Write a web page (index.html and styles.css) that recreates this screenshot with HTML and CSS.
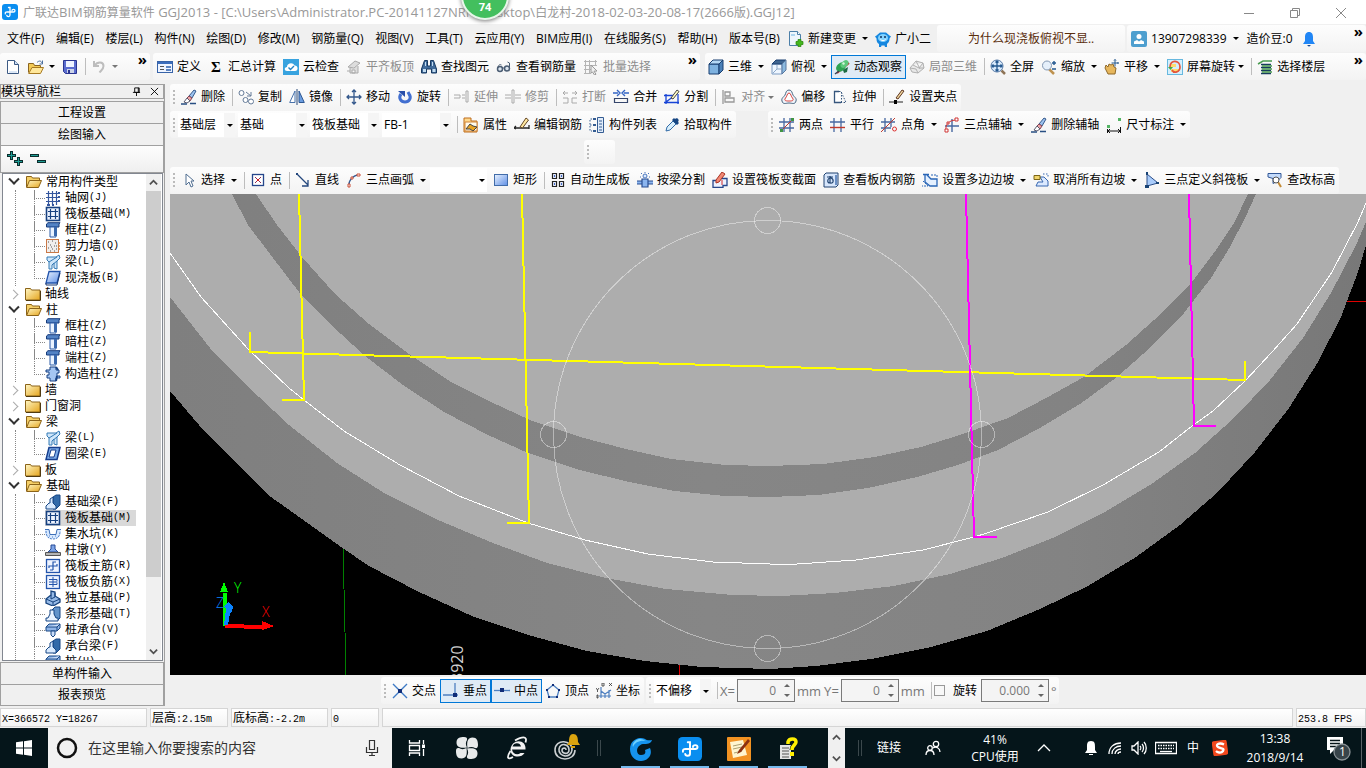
FILE: index.html
```html
<!DOCTYPE html>
<html lang="zh-CN">
<head>
<meta charset="utf-8">
<title>广联达BIM钢筋算量软件 GGJ2013</title>
<link rel="stylesheet" href="styles.css">
</head>
<body>
<svg class="defs" aria-hidden="true">
<defs>
<linearGradient id="g-blue" x1="0" y1="0" x2="1" y2="1"><stop offset="0" stop-color="#eaf3ff"/><stop offset="1" stop-color="#5f8fe6"/></linearGradient>
<linearGradient id="g-gold" x1="0" y1="0" x2="1" y2="1"><stop offset="0" stop-color="#fff6c4"/><stop offset="1" stop-color="#e5a51e"/></linearGradient>
<linearGradient id="g-solid" x1="170" y1="0" x2="1366" y2="0" gradientUnits="userSpaceOnUse"><stop offset="0" stop-color="#7f7f7f"/><stop offset=".45" stop-color="#868686"/><stop offset=".75" stop-color="#838383"/><stop offset="1" stop-color="#787878"/></linearGradient>
</defs>
<symbol id="app" viewBox="0 0 16 16"><rect width="16" height="16" rx="3" fill="#0a8ef0"/><path d="M6.500 3.500H8v7.500c0 2-3 2-3.200.3M3.300 9.800C3 8.300 4 8 5 8h6.500c2 0 2-2.600 0-2.600-1 0-1.500.6-1.500 1.200" fill="none" stroke="#fff" stroke-width="1.300" stroke-linecap="round"/></symbol>
<symbol id="new" viewBox="0 0 16 16"><path d="M2.500 1.500h7l4 4v9h-11z" fill="#fff" stroke="#3c5a84"/><path d="M9.500 1.500v4h4" fill="#cfe0f5" stroke="#3c5a84"/><path d="M4 12h8v2H4z" fill="#dce8f7"/></symbol>
<symbol id="open" viewBox="0 0 16 16"><path d="M.5 13.500v-9h5l1 2h6v2" fill="#f3ca56" stroke="#8a6420"/><path d="M.7 14.500 4 8.500h11.500l-3 6z" fill="#ffe79a" stroke="#a77a22"/><path d="M9 3.500c2-2 4-2 5 .5M14.500 1.500V5h-3" fill="none" stroke="#4a6f9e"/></symbol>
<symbol id="save" viewBox="0 0 16 16"><path d="M1.500 1.500h13v13h-11l-2-2z" fill="#5a6ccf" stroke="#2a3590"/><path d="M4 2h8v6H4z" fill="#eef3ff"/><path d="M5 10h7v4H5z" fill="#ccd4e8"/><path d="M6 11h2v3H6z" fill="#2a3590"/></symbol>
<symbol id="undo" viewBox="0 0 16 16"><path d="M3 2v5h5M3.500 6.500c3-4 9-4 9 .5 0 3-2 4-4 6.500" fill="none" stroke="#bdbdbd" stroke-width="2"/></symbol>
<symbol id="newchange" viewBox="0 0 16 16"><path d="M1.500.5h8l3 3v11h-11z" fill="#eef6fc" stroke="#4c7fa8"/><path d="M9.500.5v3h3" fill="#fff" stroke="#4c7fa8"/><path d="M3 3h4v2H3z" fill="#aed5f0"/><path d="M10 8.500h3v2h2v3h-2v2h-3v-2H8v-3h2z" fill="#45b81e" stroke="#258306" stroke-width=".7"/></symbol>
<symbol id="mascot" viewBox="0 0 16 16"><path d="M5 1.500h6l3.500 3 1.500 1-1.500 2C14.500 11 13 12 12 13v3h-2l-.5-1.500h-3L6 16H4v-3C2.500 12 1.500 11 1.500 7.500L0 5.500l1.500-1z" fill="#1687df"/><ellipse cx="8" cy="7" rx="5" ry="4" fill="#83d3ff"/><circle cx="6" cy="6" r="1" fill="#10305d"/><circle cx="10" cy="6" r="1" fill="#10305d"/><path d="M5.500 8.500c1.500 1.500 3.500 1.500 5 0" stroke="#fff" fill="none"/></symbol>
<symbol id="user" viewBox="0 0 16 16"><rect width="16" height="16" rx="2" fill="#4e9fcf"/><circle cx="8" cy="5.500" r="2.500" fill="#fff"/><path d="M3 13V10.500L6 9l2 1.500L10 9l3 1.500V13z" fill="#fff"/></symbol>
<symbol id="bell" viewBox="0 0 16 16"><path d="M8 1c3 0 4 2.500 4 5v4l2 3H2l2-3V6c0-2.500 1-5 4-5z" fill="#2186f5"/><path d="M6 14h4L8 15.800z" fill="#174b94"/></symbol>
<symbol id="define" viewBox="0 0 16 16"><rect x=".5" y="2.500" width="15" height="11" fill="#eef4ff" stroke="#3763a8"/><path d="M1 3h14v2H1z" fill="#3b6dbc"/><path d="M3 7.500h4M3 10.500h4" stroke="#555"/><path d="M9 7h5v2H9zM9 10h5v2H9z" fill="#5b83c0"/></symbol>
<symbol id="cloud" viewBox="0 0 16 16"><rect width="16" height="16" fill="#38a3df"/><path d="M4 12C1 12 1 8 4 8c0-4 6-5 7.500-1.500 4 0 4 5.500.5 5.500z" fill="#fff"/><path d="m5.500 8.500 2 2L11 7" fill="none" stroke="#2384c4" stroke-width="1.400"/></symbol>
<symbol id="flat" viewBox="0 0 16 16"><path d="M2 8 9 2l5 2-6 5zM4 9v5h8V7M1 12h3M6 11h3v3H6z" fill="#ddd" stroke="#aaa"/></symbol>
<symbol id="find" viewBox="0 0 16 16"><path d="M3.500 1.500h3V7h3V1.500h3l3 8.500v4h-5v-4h-5v4h-5v-4z" fill="#426c9b" stroke="#173960"/><path d="M2 10h3v3H2zM11.500 10h3v3h-3zM4 3h1v4H4zM11 3h1v4h-1z" fill="#c3dcf0"/></symbol>
<symbol id="glasses" viewBox="0 0 16 16"><circle cx="4" cy="10" r="2.500" fill="#dce5ef" stroke="#4b5d73" stroke-width="1.500"/><circle cx="11" cy="9.500" r="2.500" fill="#dce5ef" stroke="#4b5d73" stroke-width="1.500"/><path d="M6.500 9h2M2 9c0-3 2-4 3.500-3M13.500 9V4l-2-1" fill="none" stroke="#4b5d73"/></symbol>
<symbol id="batch" viewBox="0 0 16 16"><path d="M1 2.500h13M1 6.500h13M1 10.500h8M1 14.500h7M2.500 1v14M6.500 1v14M12.500 1v6" stroke="#b5b5b5" fill="none"/><path d="m8 6 6 6-3 .2 2 3-1.500.8-2-3L8 14z" fill="#eee" stroke="#9a9a9a"/></symbol>
<symbol id="cube" viewBox="0 0 16 16"><path d="M1 5h10v10H1z" fill="#7eb2e0" stroke="#193f70"/><path d="m1 5 4-4h10l-4 4z" fill="#b4d8f5" stroke="#193f70"/><path d="m11 5 4-4v10l-4 4z" fill="#4a80b8" stroke="#193f70"/></symbol>
<symbol id="cubetop" viewBox="0 0 16 16"><path d="M1 5h10v10H1z" fill="#eef6ff" stroke="#7c9bc2"/><path d="m1 5 4-4h10l-4 4z" fill="#3f6590" stroke="#193f70"/><path d="m11 5 4-4v10l-4 4z" fill="#8bb9df" stroke="#58779e"/><path d="m2 14 4-4h4M6 10V6" stroke="#8da9c9" fill="none"/></symbol>
<symbol id="dyn" viewBox="0 0 16 16"><path d="M3 14 15 4" stroke="#c33325" stroke-width="2"/><ellipse cx="7" cy="8" rx="5.500" ry="4" transform="rotate(-40 7 8)" fill="#2ea353"/><ellipse cx="10.500" cy="5" rx="4.500" ry="3" transform="rotate(-40 10.500 5)" fill="#5cc97c"/><path d="m9 11 5-3-1 5-3 1z" fill="#1c6a43"/><path d="m1 15 4-3" stroke="#345" stroke-width="1.500"/><circle cx="9.500" cy="4.500" r="1.200" fill="#d6f5dc"/></symbol>
<symbol id="part3d" viewBox="0 0 16 16"><path d="m1 9 6-7 7 2 1 5-6 5-6-1zM4 6l6 3 4-5M7 2l4 8M1 9l6 1 2 4M10 9l5 0" fill="#e8e8e8" stroke="#b0b0b0"/></symbol>
<symbol id="full" viewBox="0 0 16 16"><path d="m11.500 11.500 3.500 3.500" stroke="#8e7457" stroke-width="2.500"/><circle cx="7" cy="7" r="6" fill="#d8e9fb" stroke="#5578a5"/><path d="M7 2v10M2 7h10M5.500 3.500 7 2l1.500 1.500M5.500 10.500 7 12l1.500-1.500M3.500 5.500 2 7l1.500 1.500M10.500 5.500 12 7l-1.500 1.500" fill="none" stroke="#24588f" stroke-width="1.300"/></symbol>
<symbol id="zoomi" viewBox="0 0 16 16"><path d="m8 10 5 5" stroke="#be9250" stroke-width="2.500"/><circle cx="6" cy="6.500" r="4.500" fill="#e6f0fb" stroke="#8398b3"/><path d="M13 2v4M11 4h4M11 10h4" stroke="#24588f" stroke-width="1.400"/></symbol>
<symbol id="pan" viewBox="0 0 16 16"><path d="M4 15 1 9l1-3 2 2 1-3 2 1 2-1 1 3 2 1-1 6z" fill="#e7b75d" stroke="#8f692a"/><path d="M11 .5v7M7.500 4h7M10 1.500l1-1 1 1M13.500 3l1 1-1 1" fill="none" stroke="#24588f"/></symbol>
<symbol id="rotscr" viewBox="0 0 16 16"><rect x=".5" y=".5" width="15" height="15" fill="#d5effc" stroke="#67b8df"/><path d="M4 10h8v3H4zM4 5h5v3H4z" fill="#ffdc6e"/><path d="M3 8c0-8 10-7 10 0 0 5-6 7-8 3" fill="none" stroke="#e4553d" stroke-width="1.700"/><path d="M1 8h5L3.500 11z" fill="#45a842"/></symbol>
<symbol id="floors" viewBox="0 0 16 16"><path d="M4 5.500h10M4 8.500h10M4 11.500h10M4 14.500h10" stroke="#183c5d" stroke-width="1.500"/><path d="M1 5l5-3h9M5 7h10M5 10h10M5 13h10" stroke="#4a9c50" stroke-width="1.500" fill="none"/></symbol>
<symbol id="erase" viewBox="0 0 16 16"><path d="m8 7 5-6 2 1-4 7z" fill="#9cc2ef" stroke="#35598c"/><path d="m6 9 2-2 3 2-2 3z" fill="#eda4a6" stroke="#834453"/><path d="m6 9-3 4 3 1 3-2z" fill="#fff" stroke="#5a5a6d"/><path d="M0 15h6M9 14.500h6" stroke="#284f83" stroke-width="1.700" fill="none"/></symbol>
<symbol id="copy" viewBox="0 0 16 16"><circle cx="3.500" cy="4" r="2.500" fill="#fff" stroke="#657b98"/><circle cx="7.500" cy="11" r="2.500" fill="#fff" stroke="#657b98"/><circle cx="13" cy="12.500" r="2.500" fill="#fff" stroke="#657b98"/><path d="M8 3l5 4M13 3v4H9" stroke="#657b98" fill="none"/></symbol>
<symbol id="mirror" viewBox="0 0 16 16"><path d="M.7 13.500 6 2v11.500z" fill="#fff" stroke="#4972aa"/><path d="M15.300 13.500 10 2v11.500z" fill="#6b9de0" stroke="#2d5792"/><path d="M8 0v16" stroke="#294976"/></symbol>
<symbol id="move" viewBox="0 0 16 16"><path d="M8 1v14M1 8h14M6 3l2-2 2 2M6 13l2 2 2-2M3 6 1 8l2 2M13 6l2 2-2 2" fill="none" stroke="#34588c" stroke-width="1.300"/></symbol>
<symbol id="rot" viewBox="0 0 16 16"><path d="M4 5c-3 4 0 8 4 8s7-4 4-8l-1-2" fill="none" stroke="#426fd0" stroke-width="3"/><path d="M1 2h7v6z" fill="#294fa9"/></symbol>
<symbol id="extend" viewBox="0 0 16 16"><path d="M0 6h6v3H0M8 6h3M8 9h3M12 2h2v11h-2z" fill="none" stroke="#aaa"/></symbol>
<symbol id="trim" viewBox="0 0 16 16"><path d="M0 6h6M0 9h6M10 6h6M10 9h6M7 1h2v13H7z" fill="none" stroke="#aaa"/></symbol>
<symbol id="break" viewBox="0 0 16 16"><path d="M1 9h5v5H1M15 9h-5v5h5M1 4h5M10 4h5M3 2 1 4l2 2M13 2l2 2-2 2" fill="none" stroke="#aaa"/></symbol>
<symbol id="merge" viewBox="0 0 16 16"><path d="M6 9.500H1.500v4H6M10 9.500h4.500v4H10M6 9.500h4M6 13.500h4" fill="none" stroke="#35456b" stroke-width="1.200"/><path d="M0 4h5M11 4h5M4 1l3 3-3 3M12 1 9 4l3 3" fill="none" stroke="#3465c5" stroke-width="1.400"/></symbol>
<symbol id="split" viewBox="0 0 16 16"><path d="M0 6.500h10M0 13.500h15M2 5v10M14 5v10M2 13l8-6" fill="none" stroke="#1743d6" stroke-width="1.300"/><path d="m7 9 6-8 2 1.500-6 7.500z" fill="#fffbc4" stroke="#444"/></symbol>
<symbol id="align" viewBox="0 0 16 16"><path d="M2 1v14M4 3h5v4H4zM4 9h9v4H4z" fill="none" stroke="#999" stroke-width="1.300"/></symbol>
<symbol id="offset" viewBox="0 0 16 16"><path d="M8 1C5 1 5 4 4 6s-4 3-3 6c1 4 4 2 7 2s6 2 7-2c1-3-2-4-3-6S11 1 8 1z" fill="#eef3fa" stroke="#496681"/><path d="M8 4C6 4 6 8 4.500 9c-2 3 1 3 3.500 3s5.500 0 3.500-3C10 8 10 4 8 4z" fill="#fff" stroke="#d9423c"/></symbol>
<symbol id="stretch" viewBox="0 0 16 16"><path d="M7 2.500H2.500v11H9" fill="#fff" stroke="#36567d" stroke-width="1.300"/><path d="M7 2.500h2l5 11H9M9.500 3v10" fill="none" stroke="#36567d" stroke-dasharray="1.500 1.500"/></symbol>
<symbol id="gripset" viewBox="0 0 16 16"><path d="M0 13h5M8 13h6" stroke="#222"/><path d="M5 11h3v4H5z"/><path d="m7 9 6-8 2 1-6 8z" fill="#efd59c" stroke="#5f3722"/></symbol>
<symbol id="attr" viewBox="0 0 16 16"><path d="M1 1h7v3h6v11H1z" fill="#ffd88c" stroke="#bd6c1d"/><path d="M2 5h12v9H2z" fill="#fffbed" stroke="#d18439"/><path d="m3 12 4-5 3 2 4 1-4 4-3-2z" fill="#e8a323" stroke="#444"/></symbol>
<symbol id="editbar" viewBox="0 0 16 16"><path d="M0 11h15M2 9l-2 2 2 1M15 8v4" fill="none" stroke="#262626" stroke-width="1.300"/><path d="m6 10 6-9 2.500 2-6 8z" fill="#ffe8a0" stroke="#644625"/></symbol>
<symbol id="list" viewBox="0 0 16 16"><path d="M3 2H1v12h2M1 8h2" fill="none" stroke="#345c92" stroke-dasharray="1.500"/><path d="M4 2h3M4 8h3M4 14h3" stroke="#345c92" stroke-width="2"/><path d="M8.500.5h6v15h-6z" fill="#e1ecfa" stroke="#345c92"/><path d="M10 4h3M10 7h3M10 10h3M10 13h3" stroke="#345c92"/></symbol>
<symbol id="pick" viewBox="0 0 16 16"><path d="m2 14 1-4 6-6 3 3-6 6z" fill="#d9effc" stroke="#316ba7"/><path d="m8 3 2-2 1 1c2-2 5 1 3 3l1 1-2 2z" fill="#174683"/></symbol>
<symbol id="twopt" viewBox="0 0 16 16"><path d="M5 1v14M11 1v14M0 5h15M0 11h15" stroke="#4768a1" stroke-width="1.300"/><path d="m2 14 12-12" stroke="#c23a2c"/><path d="M1 12h3v3H1zM12 1h3v3h-3z" fill="#409444"/></symbol>
<symbol id="para" viewBox="0 0 16 16"><path d="M4 1v14M11 1v14M0 5h15" stroke="#4768a1" stroke-width="1.300"/><path d="M0 10.500h15" stroke="#c23a2c" stroke-width="1.400"/></symbol>
<symbol id="ptang" viewBox="0 0 16 16"><path d="M4 1v14M10 1v9M0 5h14M0 11h10" stroke="#4768a1" stroke-width="1.300"/><path d="m0 15 14-14" stroke="#c23a2c"/><circle cx="13.500" cy="12" r="2" fill="none" stroke="#d33"/></symbol>
<symbol id="arc3" viewBox="0 0 16 16"><path d="M8 2v13M1 9h14" stroke="#4768a1" stroke-width="1.400"/><path d="M2 14C1 7 5 3 13 3" fill="none" stroke="#cf3434"/><path d="M1 12h3v3H1zM11 1h3v3h-3zM3 5h2v2H3z" fill="#fff" stroke="#cf3434"/></symbol>
<symbol id="dim" viewBox="0 0 16 16"><path d="M1 8h3v3H1zM12 1h3v3h-3z" fill="#54b464"/><path d="M1.500 12v4M14.500 10v6M2 14h12M4 12l-2 2 2 2M12 12l2 2-2 2" fill="none" stroke="#111"/></symbol>
<symbol id="cursor" viewBox="0 0 16 16"><path d="M5 2v11l3-3 2 5 2-1-2-5h3z" fill="#fff" stroke="#506e91"/></symbol>
<symbol id="point" viewBox="0 0 16 16"><rect x="2.500" y="2.500" width="11" height="11" fill="#fff" stroke="#26468b" stroke-width="1.300"/><path d="m5 5 6 6M11 5l-6 6" stroke="#8f2d58"/><path d="M7 7h2v2H7z" fill="#d21f1f"/></symbol>
<symbol id="line" viewBox="0 0 16 16"><path d="m2 2 11 11M13 8v6H7" fill="none" stroke="#24477d" stroke-width="1.300"/><path d="M1 1h2v2H1z" fill="#24477d"/></symbol>
<symbol id="arc" viewBox="0 0 16 16"><path d="M3 14C2 9 7 3 13 3" fill="none" stroke="#365c94" stroke-width="1.300"/><path d="M2 12h2v3H2zM5 5h2v2H5zM11 2h3v2h-3z" fill="#fff" stroke="#c94f36"/></symbol>
<symbol id="rect" viewBox="0 0 16 16"><rect x="1.500" y="2.500" width="13" height="11" fill="url(#g-blue)" stroke="#416ca9"/></symbol>
<symbol id="autoslab" viewBox="0 0 16 16"><path d="M2.500 1.500h4v5h-4zM9.500 1.500h4v5h-4zM2.500 9.500h4v5h-4zM9.500 9.500h4v5h-4z" fill="#e9efff" stroke="#222" stroke-width="1.200"/><path d="M4 3h1v2H4zM11 3h1v2h-1zM4 11h1v2H4zM11 11h1v2h-1z" fill="#3e67c7"/></symbol>
<symbol id="beamcut" viewBox="0 0 16 16"><path d="M0 9h5v3H0M16 9h-5v3h5M5 7h6v8H5z" fill="#8bb5ef" stroke="#284d90" stroke-width="1.200"/><circle cx="8" cy="4" r="2" fill="#dcebff" stroke="#4b76bd"/><path d="M8 0v1M4 1l1 1M12 1l-1 1M3 5h1M12 5h1" stroke="#4b76bd"/></symbol>
<symbol id="varsec" viewBox="0 0 16 16"><path d="M1 8.500h6v-2h8v7h-4v2H1z" fill="#edf2ff" stroke="#26468b" stroke-width="1.300"/><path d="m4 8 6-8 3 2-6 8-3 1z" fill="#f18974" stroke="#aa3425"/><path d="M10 8v5" stroke="#d42a2a"/></symbol>
<symbol id="viewbar" viewBox="0 0 16 16"><path d="M3 1h12v12l-2 2H1V3z" fill="#d7e6fb" stroke="#204371"/><path d="M4 5h6M7 4v7c4 1 4-4 1-5s-5 5-1 5" fill="none" stroke="#204371" stroke-width="1.200"/><path d="M13 3v10" stroke="#6a8fc4" stroke-width="2"/></symbol>
<symbol id="slope" viewBox="0 0 16 16"><path d="M1 2.500h6M3 3v7l5 4h7V7H9L5 3" fill="#e4f0ff" stroke="#2865b6" stroke-width="1.300"/><path d="m1 9 5 5H0M9 3h6v3" fill="none" stroke="#2865b6" stroke-dasharray="2 1"/></symbol>
<symbol id="cslope" viewBox="0 0 16 16"><path d="M7 5h4l4 4v5H3l2-4h5z" fill="#dbe9ff" stroke="#3767b0"/><path d="M1 3.500h6v4H1z" fill="#f1d56b" stroke="#7c6616"/><path d="M10 2h5v4" fill="none" stroke="#3767b0" stroke-dasharray="1.500"/></symbol>
<symbol id="tri" viewBox="0 0 16 16"><path d="M3 2v12l11-3z" fill="#a9ccfb" stroke="#2d4f89"/><path d="M2 0h2v3H2zM1 13h4v3H1zM12 10h3v2h-3z" fill="#174274"/></symbol>
<symbol id="elev" viewBox="0 0 16 16"><path d="M1 1.500h13v4l-4 4-4 2v-5L1 5z" fill="#c3dafa" stroke="#315796"/><path d="m11 10 3 5" stroke="#c48b35" stroke-width="2"/><circle cx="9" cy="8" r="3" fill="#fff" stroke="#555"/></symbol>
<symbol id="cross" viewBox="0 0 16 16"><path d="M1 1l14 14M15 1 1 15" stroke="#3f7bc6" stroke-width="1.400"/><path d="M6 6h4v4H6z" fill="#102d78"/></symbol>
<symbol id="perp" viewBox="0 0 16 16"><path d="M12 0v13M0 12h15" stroke="#4f80c0" stroke-width="1.300"/><path d="M10 10h4v4h-4z" fill="#102d78"/></symbol>
<symbol id="mid" viewBox="0 0 16 16"><path d="M0 7.500h16" stroke="#4f80c0" stroke-width="1.300"/><path d="M6 5h4v4H6z" fill="#102d78"/></symbol>
<symbol id="vertex" viewBox="0 0 16 16"><path d="M8 2 14 7l-2 7H4L2 7z" fill="none" stroke="#4f80c0" stroke-width="1.300"/><path d="M7 1h2v2H7zM1 6h2v2H1zM13 6h2v2h-2zM3 13h2v2H3zM11 13h2v2h-2z" fill="#102d78"/></symbol>
<symbol id="coord" viewBox="0 0 16 16"><path d="M5 4v11M3 13h12M5 8l4 3 6-4M9 11v4M13 7v8" fill="none" stroke="#4f80c0" stroke-width="1.200"/><path d="m13 0 3 3m0-3-3 3M0 5l1.500 2L3 5M1.500 7v2M6 0h2v3H6zM1 12h1v3H1z" fill="none" stroke="#333" stroke-width=".8"/></symbol>
<symbol id="folder" viewBox="0 0 16 16"><path d="M.5 2.500h5l1 1.500h8.500v10H.5z" fill="url(#g-gold)" stroke="#8b6318"/><path d="M1 14.500h14.500V5" fill="none" stroke="#503a10"/></symbol>
<symbol id="folderopen" viewBox="0 0 16 16"><path d="M.5 13V2.500h5l1 1.500h7V7" fill="#f5cf67" stroke="#8b6318"/><path d="M.6 13.500 3.500 6.500h12l-3 7z" fill="url(#g-gold)" stroke="#8b6318"/></symbol>
<symbol id="grid" viewBox="0 0 16 16"><path d="M3.500 1v14M7.500 1v14M11.500 1v14M1 3.500h12M1 7.500h12M1 11.500h12" stroke="#34569e" stroke-width="1.200"/><path d="M13 2h2v2h-2zM13 6h2v2h-2zM13 10h2v2h-2zM2 14h3v2H2zM7 14h2v2H7z" fill="#34569e"/></symbol>
<symbol id="raft" viewBox="0 0 16 16"><rect x="1.500" y="1.500" width="13" height="13" fill="#eef4ff" stroke="#174180" stroke-width="1.600"/><path d="M3 5.500h10M3 10.500h10M5.500 3v10M10.500 3v10" stroke="#174180" stroke-width="1.200"/></symbol>
<symbol id="col" viewBox="0 0 16 16"><path d="M1.500 2 3 .7h12L14 2v3H1.500z" fill="#5383c5" stroke="#173b7a"/><path d="M5 5h6v10H5z" fill="#eaf3ff" stroke="#2a5ba7"/><path d="M9 5h3v9H9z" fill="#3a68ac"/></symbol>
<symbol id="wall" viewBox="0 0 16 16"><rect x="1.500" y="1.500" width="12" height="13" fill="#f1eeec" stroke="#c97847"/><path d="M3 4h1M7 3h1M10 5h1M5 7h1M9 8h1M3 10h1M7 11h1M11 11h1M5 13h1M9 13h1M6 9h1M11 8h1" stroke="#555"/><path d="M13 5h2M13 8h2M13 11h2" stroke="#e0823a" stroke-width="1.400"/></symbol>
<symbol id="beam" viewBox="0 0 16 16"><path d="M2 3h9l3-2 1 3-3 3v8l-3-1V9l-2 2v4H4v-7L2 6z" fill="#cfe6fa" stroke="#347ab5"/><path d="m4 8 8-5M7 11l5-4" stroke="#347ab5"/></symbol>
<symbol id="slab" viewBox="0 0 16 16"><path d="M4 1.500h11L12 13H1z" fill="url(#g-blue)" stroke="#2153ab" stroke-width="1.300"/><path d="M1 13v2h11l3-12" fill="none" stroke="#18346c"/></symbol>
<symbol id="scol" viewBox="0 0 16 16"><path d="M5 1h6v3h3v3h-2v3h3v2h-4v3H5v-3H2V9h2V6H1V4h4z" fill="#a5c6f3" stroke="#174083"/><path d="M11 1l2 3M12 10l-1 5" stroke="#174083" stroke-width="2"/></symbol>
<symbol id="ring" viewBox="0 0 16 16"><path d="M4 1.500h11l-3 12H1z" fill="#7cabe7" stroke="#163e8e" stroke-width="1.500"/><path d="M6 4h5l-2 7H4z" fill="#fff" stroke="#163e8e"/></symbol>
<symbol id="fbeam" viewBox="0 0 16 16"><path d="m8 3 3-2h4v10l-4 4H8z" fill="#326aa9" stroke="#174785"/><path d="M1 15v-3l3-3h1V5l3-2v6l3 3v3z" fill="#d9eafe" stroke="#174785"/></symbol>
<symbol id="pit" viewBox="0 0 16 16"><path d="M0 4h4l1 4h6l1-4h4c0 7-3 9-8 9S0 11 0 4z" fill="#d8e9ff"/><path d="M0 3.500h4l1 5h6l1-5h4" fill="none" stroke="#3d6fb8"/><path d="M1 5c0 6 3 8 7 8s7-2 7-8" fill="none" stroke="#4d7fc8" stroke-dasharray="2 1"/><path d="M4 10h1M7 11h1M10 10h1" stroke="#4d7fc8"/></symbol>
<symbol id="pier" viewBox="0 0 16 16"><path d="M6 3h4v4l3 3H3l3-3z" fill="#7da4e6" stroke="#274b96"/><path d="M.5 10.500h15v3H.5z" fill="#b5b5b5" stroke="#555"/></symbol>
<symbol id="mainbar" viewBox="0 0 16 16"><rect x="1.500" y="1.500" width="13" height="13" fill="#eef4ff" stroke="#2455ac" stroke-width="1.300"/><path d="M4 10V8h8V6M8 12V4h3M8 12H5" fill="none" stroke="#2455ac" stroke-width="1.200"/></symbol>
<symbol id="negbar" viewBox="0 0 16 16"><rect x="1.500" y="1.500" width="13" height="13" fill="#eef4ff" stroke="#2455ac" stroke-width="1.300"/><path d="M4 5.500h8v2M4 10.500h8v-2M4 8h8M8 3v10" fill="none" stroke="#2455ac"/></symbol>
<symbol id="indep" viewBox="0 0 16 16"><path d="m1 9 5-4V1l4 1v4l5 3v3l-7 4-7-3z" fill="#96bae7" stroke="#16437e" stroke-width="1.300"/><path d="m1 9 7 3 7-3M8 12v3M6 5v4l4-2V3" fill="none" stroke="#16437e"/></symbol>
<symbol id="strip" viewBox="0 0 16 16"><path d="m7 4 3-3h5v11l-3 3z" fill="#6293ca" stroke="#174785"/><path d="M1 15v-3h2l2-4V4h4v4l2 4h2v3z" fill="#e8f2ff" stroke="#174785"/></symbol>
<symbol id="cap" viewBox="0 0 16 16"><path d="m1 5 3-3h11v4l-3 3H1z" fill="#91b6e8" stroke="#174785"/><path d="M1 5h11l3-3M12 5v4M6 9h4v4l-2 2-2-2z" fill="#c9ddf9" stroke="#174785"/></symbol>
</svg>

<header class="titlebar">
  <svg class="ic"><use href="#app"/></svg>
  <h1><span>广联达</span>BIM<span>钢筋算量软件</span> GGJ2013 - [C:\Users\Administrator.PC-20141127NRH\Desktop\<span>白龙村</span>-2018-02-03-20-08-17(2666<span>版</span>).GGJ12]</h1>
  <div class="ball">74</div>
  <div class="winbtns">
    <button aria-label="最小化"><svg viewBox="0 0 12 12"><path d="M1 6.500h10"/></svg></button>
    <button aria-label="还原"><svg viewBox="0 0 12 12"><path d="M1.500 3.500h7v7h-7zM3.500 3V1.500h7v7H9"/></svg></button>
    <button aria-label="关闭"><svg viewBox="0 0 12 12"><path d="m1 1 10 10M11 1 1 11"/></svg></button>
  </div>
</header>

<div class="menurow">
  <nav class="menu">
    <button>文件(F)</button><button>编辑(E)</button><button>楼层(L)</button><button>构件(N)</button><button>绘图(D)</button><button>修改(M)</button><button>钢筋量(Q)</button><button>视图(V)</button><button>工具(T)</button><button>云应用(Y)</button><button>BIM应用(I)</button><button>在线服务(S)</button><button>帮助(H)</button><button>版本号(B)</button>
  </nav>
  <button class="btn"><svg class="ic"><use href="#newchange"/></svg>新建变更<i class="dd"></i></button>
  <button class="btn"><svg class="ic"><use href="#mascot"/></svg>广小二</button>
  <div class="bar promo"><a href="#help">为什么现浇板俯视不显..</a></div>
  <div class="bar account">
    <button class="btn"><svg class="ic"><use href="#user"/></svg>13907298339<i class="dd"></i></button>
    <span>造价豆:0</span>
    <svg class="ic"><use href="#bell"/></svg>
    <button class="more" aria-label="更多">»</button>
  </div>
</div>

<div class="toolrow">
  <div class="bar file">
    <button class="mini" aria-label="新建"><svg class="ic"><use href="#new"/></svg></button>
    <button class="mini" aria-label="打开"><svg class="ic"><use href="#open"/></svg><i class="dd"></i></button>
    <button class="mini" aria-label="保存"><svg class="ic"><use href="#save"/></svg></button>
    <i class="sep"></i>
    <button class="mini off" aria-label="撤销"><svg class="ic"><use href="#undo"/></svg><i class="dd"></i></button>
    <button class="more" aria-label="更多">»</button>
  </div>
  <div class="bar common">
    <button class="btn"><svg class="ic"><use href="#define"/></svg>定义</button>
    <button class="btn"><b class="ic sigma">Σ</b>汇总计算</button>
    <button class="btn"><svg class="ic"><use href="#cloud"/></svg>云检查</button>
    <button class="btn off"><svg class="ic"><use href="#flat"/></svg>平齐板顶</button>
    <button class="btn"><svg class="ic"><use href="#find"/></svg>查找图元</button>
    <button class="btn"><svg class="ic"><use href="#glasses"/></svg>查看钢筋量</button>
    <button class="btn off"><svg class="ic"><use href="#batch"/></svg>批量选择</button>
    <button class="more" aria-label="更多">»</button>
  </div>
  <div class="bar view">
    <button class="btn"><svg class="ic"><use href="#cube"/></svg>三维<i class="dd"></i></button>
    <button class="btn"><svg class="ic"><use href="#cubetop"/></svg>俯视<i class="dd"></i></button>
    <button class="btn on"><svg class="ic"><use href="#dyn"/></svg>动态观察</button>
    <button class="btn off"><svg class="ic"><use href="#part3d"/></svg>局部三维</button>
    <i class="sep"></i>
    <button class="btn"><svg class="ic"><use href="#full"/></svg>全屏</button>
    <button class="btn"><svg class="ic"><use href="#zoomi"/></svg>缩放<i class="dd"></i></button>
    <button class="btn"><svg class="ic"><use href="#pan"/></svg>平移<i class="dd"></i></button>
    <button class="btn"><svg class="ic"><use href="#rotscr"/></svg>屏幕旋转<i class="dd tight"></i></button>
    <i class="sep"></i>
    <button class="btn"><svg class="ic"><use href="#floors"/></svg>选择楼层</button>
    <button class="more" aria-label="更多">»</button>
  </div>
</div>

<main class="work">
  <aside class="side">
    <div class="sidehead"><h2>模块导航栏</h2>
      <button aria-label="固定"><svg viewBox="0 0 10 10"><path d="M3 1h5v5H3zM1 6h8M5 6v4M7 1v5"/></svg></button>
      <button aria-label="关闭"><svg viewBox="0 0 10 10"><path d="m1 1 8 8M9 1 1 9"/></svg></button>
    </div>
    <button class="tab">工程设置</button>
    <button class="tab">绘图输入</button>
    <div class="pm">
      <button aria-label="全部展开"><svg viewBox="0 0 16 16"><path d="M4.500 0v9M0 4.500h9M11.500 6v9M7 10.500h9" stroke="#0b2d2c" stroke-width="3"/><path d="M4.500 1v7M1 4.500h7M11.500 7v7M8 10.500h7" stroke="#1e9d94"/></svg></button>
      <button aria-label="全部折叠"><svg viewBox="0 0 16 16"><path d="M0 4.500h9M7 10.500h9" stroke="#0b2d2c" stroke-width="3"/><path d="M1 4.500h7M8 10.500h7" stroke="#1e9d94"/></svg></button>
    </div>
    <div class="treebox">
      <ul class="tree">
        <li class="open"><div class="fold"><svg class="ic"><use href="#folderopen"/></svg>常用构件类型</div>
          <ul>
            <li><span><svg class="ic"><use href="#grid"/></svg>轴网<s>(J)</s></span></li>
            <li><span><svg class="ic"><use href="#raft"/></svg>筏板基础<s>(M)</s></span></li>
            <li><span><svg class="ic"><use href="#col"/></svg>框柱<s>(Z)</s></span></li>
            <li><span><svg class="ic"><use href="#wall"/></svg>剪力墙<s>(Q)</s></span></li>
            <li><span><svg class="ic"><use href="#beam"/></svg>梁<s>(L)</s></span></li>
            <li><span><svg class="ic"><use href="#slab"/></svg>现浇板<s>(B)</s></span></li>
          </ul></li>
        <li><div class="fold"><svg class="ic"><use href="#folder"/></svg>轴线</div></li>
        <li class="open"><div class="fold"><svg class="ic"><use href="#folderopen"/></svg>柱</div>
          <ul>
            <li><span><svg class="ic"><use href="#col"/></svg>框柱<s>(Z)</s></span></li>
            <li><span><svg class="ic"><use href="#col"/></svg>暗柱<s>(Z)</s></span></li>
            <li><span><svg class="ic"><use href="#col"/></svg>端柱<s>(Z)</s></span></li>
            <li><span><svg class="ic"><use href="#scol"/></svg>构造柱<s>(Z)</s></span></li>
          </ul></li>
        <li><div class="fold"><svg class="ic"><use href="#folder"/></svg>墙</div></li>
        <li><div class="fold"><svg class="ic"><use href="#folder"/></svg>门窗洞</div></li>
        <li class="open"><div class="fold"><svg class="ic"><use href="#folderopen"/></svg>梁</div>
          <ul>
            <li><span><svg class="ic"><use href="#beam"/></svg>梁<s>(L)</s></span></li>
            <li><span><svg class="ic"><use href="#ring"/></svg>圈梁<s>(E)</s></span></li>
          </ul></li>
        <li><div class="fold"><svg class="ic"><use href="#folder"/></svg>板</div></li>
        <li class="open"><div class="fold"><svg class="ic"><use href="#folderopen"/></svg>基础</div>
          <ul>
            <li><span><svg class="ic"><use href="#fbeam"/></svg>基础梁<s>(F)</s></span></li>
            <li><span class="sel"><svg class="ic"><use href="#raft"/></svg>筏板基础<s>(M)</s></span></li>
            <li><span><svg class="ic"><use href="#pit"/></svg>集水坑<s>(K)</s></span></li>
            <li><span><svg class="ic"><use href="#pier"/></svg>柱墩<s>(Y)</s></span></li>
            <li><span><svg class="ic"><use href="#mainbar"/></svg>筏板主筋<s>(R)</s></span></li>
            <li><span><svg class="ic"><use href="#negbar"/></svg>筏板负筋<s>(X)</s></span></li>
            <li><span><svg class="ic"><use href="#indep"/></svg>独立基础<s>(P)</s></span></li>
            <li><span><svg class="ic"><use href="#strip"/></svg>条形基础<s>(T)</s></span></li>
            <li><span><svg class="ic"><use href="#cap"/></svg>桩承台<s>(V)</s></span></li>
            <li><span><svg class="ic"><use href="#fbeam"/></svg>承台梁<s>(F)</s></span></li>
            <li><span><svg class="ic"><use href="#cap"/></svg>桩<s>(U)</s></span></li>
          </ul></li>
      </ul>
      <div class="scroll">
        <svg viewBox="0 0 10 10"><path d="m1 7 4-4 4 4"/></svg>
        <i></i>
        <svg viewBox="0 0 10 10"><path d="m1 3 4 4 4-4"/></svg>
      </div>
    </div>
    <button class="tab">单构件输入</button>
    <button class="tab">报表预览</button>
  </aside>

  <section class="stage">
    <div class="row">
      <div class="bar"><i class="grip"></i>
        <button class="btn"><svg class="ic"><use href="#erase"/></svg>删除</button><i class="sep"></i>
        <button class="btn"><svg class="ic"><use href="#copy"/></svg>复制</button>
        <button class="btn"><svg class="ic"><use href="#mirror"/></svg>镜像</button><i class="sep"></i>
        <button class="btn"><svg class="ic"><use href="#move"/></svg>移动</button>
        <button class="btn"><svg class="ic"><use href="#rot"/></svg>旋转</button><i class="sep"></i>
        <button class="btn off"><svg class="ic"><use href="#extend"/></svg>延伸</button>
        <button class="btn off"><svg class="ic"><use href="#trim"/></svg>修剪</button><i class="sep"></i>
        <button class="btn off"><svg class="ic"><use href="#break"/></svg>打断</button>
        <button class="btn"><svg class="ic"><use href="#merge"/></svg>合并</button>
        <button class="btn"><svg class="ic"><use href="#split"/></svg>分割</button><i class="sep"></i>
        <button class="btn off"><svg class="ic"><use href="#align"/></svg>对齐<i class="dd tight"></i></button>
        <button class="btn"><svg class="ic"><use href="#offset"/></svg>偏移</button>
        <button class="btn"><svg class="ic"><use href="#stretch"/></svg>拉伸</button><i class="sep"></i>
        <button class="btn"><svg class="ic"><use href="#gripset"/></svg>设置夹点</button>
      </div>
    </div>
    <div class="row">
      <div class="bar"><i class="grip"></i>
        <span class="combo short"><select aria-label="楼层"><option>基础层</option></select></span>
        <span class="combo"><select aria-label="构件大类"><option>基础</option></select></span>
        <span class="combo"><select aria-label="构件类型"><option>筏板基础</option></select></span>
        <span class="combo"><select aria-label="构件"><option>FB-1</option></select></span><i class="sep"></i>
        <button class="btn"><svg class="ic"><use href="#attr"/></svg>属性</button>
        <button class="btn"><svg class="ic"><use href="#editbar"/></svg>编辑钢筋</button>
        <button class="btn"><svg class="ic"><use href="#list"/></svg>构件列表</button>
        <button class="btn"><svg class="ic"><use href="#pick"/></svg>拾取构件</button>
      </div>
      <div class="bar axis"><i class="grip"></i>
        <button class="btn"><svg class="ic"><use href="#twopt"/></svg>两点</button>
        <button class="btn"><svg class="ic"><use href="#para"/></svg>平行</button>
        <button class="btn"><svg class="ic"><use href="#ptang"/></svg>点角<i class="dd"></i></button>
        <button class="btn"><svg class="ic"><use href="#arc3"/></svg>三点辅轴<i class="dd"></i></button>
        <button class="btn"><svg class="ic"><use href="#erase"/></svg>删除辅轴</button>
        <button class="btn"><svg class="ic"><use href="#dim"/></svg>尺寸标注<i class="dd"></i></button>
      </div>
    </div>
    <div class="row"><div class="bar stub"><i class="grip"></i></div></div>
    <div class="row">
      <div class="bar"><i class="grip"></i>
        <button class="btn"><svg class="ic"><use href="#cursor"/></svg>选择<i class="dd"></i></button><i class="sep"></i>
        <button class="btn"><svg class="ic"><use href="#point"/></svg>点</button><i class="sep"></i>
        <button class="btn"><svg class="ic"><use href="#line"/></svg>直线</button>
        <button class="btn"><svg class="ic"><use href="#arc"/></svg>三点画弧<i class="dd"></i></button>
        <span class="combo short plain"><select aria-label="画弧方式"><option></option></select></span>
        <button class="btn"><svg class="ic"><use href="#rect"/></svg>矩形</button><i class="sep"></i>
        <button class="btn"><svg class="ic"><use href="#autoslab"/></svg>自动生成板</button>
        <button class="btn"><svg class="ic"><use href="#beamcut"/></svg>按梁分割</button>
        <button class="btn"><svg class="ic"><use href="#varsec"/></svg>设置筏板变截面</button>
        <button class="btn"><svg class="ic"><use href="#viewbar"/></svg>查看板内钢筋</button>
        <button class="btn"><svg class="ic"><use href="#slope"/></svg>设置多边边坡<i class="dd"></i></button>
        <button class="btn"><svg class="ic"><use href="#cslope"/></svg>取消所有边坡<i class="dd"></i></button>
        <button class="btn"><svg class="ic"><use href="#tri"/></svg>三点定义斜筏板<i class="dd"></i></button>
        <button class="btn"><svg class="ic"><use href="#elev"/></svg>查改标高</button>
      </div>
    </div>

    <div class="canvas">
      <svg viewBox="170 194 1196 481" preserveAspectRatio="xMidYMid slice" role="img" aria-label="筏板基础三维视图">
        <g shape-rendering="crispEdges">
        <path fill="#000" d="M170 194h1196v481H170z"/>
        <path d="M343 545 346 675" stroke="#008000" fill="none"/>
        <path d="M679.500 660v15M1340 301.500h26" stroke="#e00000" fill="none"/>
        <path fill="url(#g-solid)" d="M170 194V391L199 425 220 447 271 497 344 549 369 566 419 592 472 616 528 635 587 651 645 661 702 667 770 669 816 666 871 659 931 647 987 631 1040 609 1088 586 1136 557 1180 525 1218 492 1255 452 1289 408 1318 362 1341 317 1358 272 1366 245V194z"/>
        <path fill="#adadad" d="M170 194V297L210 348 243 382 289 425 337 463 384 493 438 520 493 543 547 563 606 578 666 589 733 595 781 596 835 593 894 586 950 574 1002 558 1055 537 1105 512 1153 483 1195 453 1234 418 1270 380 1303 338 1331 293 1356 245 1366 222V194z"/>
        <path fill="url(#g-solid)" d="M256 194 277 225 302 257 335 294 369 324 409 354 451 382 491 402 530 420 580 437 626 449 671 459 725 465 770 466 823 464 875 457 921 447 960 435 1008 418 1048 397 1084 377 1126 345 1163 312 1192 282 1216 250 1234 223 1248 194H1256L1245 218 1230 247 1211 278 1184 313 1151 347 1117 377 1080 404 1040 428 998 450 958 465 917 477 868 488 818 495 770 497 725 496 675 491 629 482 580 470 528 453 488 435 444 412 403 385 365 356 329 323 302 296 270 254 248 225 232 194z"/>
        <path fill="none" stroke="#fff" d="M170 253 201 297 249 350 289 388 304 400 344 431 400 465 459 496 528 523 585 540 648 554 713 562 770 564 797 564 856 560 923 550 974 537 987 533 1048 512 1103 485 1159 452 1192 426 1213 411 1245 381 1272 352 1297 324 1332 272 1358 222 1366 203"/>
        <g fill="none" stroke="#ff0" stroke-width="2"><path d="M299 194 304 400H282"/><path d="M522 194 529 523H507"/><path d="M250 332V352L1245 380V361"/></g>
        <g fill="none" stroke="#f0f" stroke-width="2"><path d="M966 194 974 537H997"/><path d="M1189 194 1194 426H1216"/></g>
        <g fill="none" stroke="#fff" stroke-opacity=".42"><circle cx="767.500" cy="434.500" r="214"/><circle cx="767.500" cy="220.500" r="13"/><circle cx="767.500" cy="648.500" r="13"/><circle cx="553.500" cy="434.500" r="13"/><circle cx="981.500" cy="434.500" r="13"/></g>
        <path d="M223 626V593h4v33zM220 592l4-10 4 10z" fill="#0f0"/>
        <path d="M225 624 262 625v4l-37-1zM262 621l12 5-12 4z" fill="red"/>
        <path d="m224 625 2-16-2-2 4-5 5 5-1 4-2 2-2 12z" fill="#0a84ff"/>
        </g>
        <text x="234" y="593" fill="#0f0" class="ax">Y</text><text x="216" y="608" fill="#0a84ff" class="ax">Z</text><text x="262" y="617" fill="#f00" class="ax">X</text>
        <text class="lvl" transform="translate(463 682) rotate(-90)">3920</text>
      </svg>
    </div>

    <div class="snap">
      <div class="bar"><i class="grip"></i>
        <button class="btn"><svg class="ic"><use href="#cross"/></svg>交点</button>
        <button class="btn on"><svg class="ic"><use href="#perp"/></svg>垂点</button>
        <button class="btn on"><svg class="ic"><use href="#mid"/></svg>中点</button>
        <button class="btn"><svg class="ic"><use href="#vertex"/></svg>顶点</button>
        <button class="btn"><svg class="ic"><use href="#coord"/></svg>坐标</button>
      </div>
      <div class="bar"><i class="grip"></i>
        <span class="combo short"><select aria-label="偏移方式"><option>不偏移</option></select></span><i class="sep"></i>
        <label class="num">X=<span><input value="0" disabled><i></i></span>mm</label>
        <label class="num">Y=<span><input value="0" disabled><i></i></span>mm</label><i class="sep"></i>
        <label class="chk"><input type="checkbox">旋转</label>
        <label class="num wide"><span><input value="0.000" disabled aria-label="旋转角度"><i></i></span>°</label>
      </div>
    </div>
  </section>
</main>

<div class="status">
  <span class="s1"><s>X=366572 Y=18267</s></span>
  <span class="s2">层高<s>:2.15m</s></span>
  <span class="s3">底标高<s>:-2.2m</s></span>
  <span class="s4"><s>0</s></span>
  <span class="s5"></span>
  <span class="s6"><s>253.8 FPS</s></span>
</div>

<footer class="taskbar">
  <button class="start" aria-label="开始"><svg width="16" height="16" viewBox="0 0 16 16"><path d="M0 2.200 7 1.300v6.200H0zM8 1.200 16 0v7.500H8zM0 8.500h7v6.200l-7-.9zM8 8.500h8V16l-8-1.200z" fill="#fff"/></svg></button>
  <label class="search">
    <svg width="22" height="22" viewBox="0 0 22 22"><circle cx="11" cy="11" r="9" fill="none" stroke="#111" stroke-width="2.500"/></svg>
    <input type="search" placeholder="在这里输入你要搜索的内容">
    <svg width="16" height="18" viewBox="0 0 16 18"><path d="M5.500 1.500h5v9h-5zM2.500 8v5.500h11V8M8 13.500v3M5 16.500h6" fill="none" stroke="#333" stroke-width="1.200"/></svg>
  </label>
  <div class="apps">
    <button aria-label="任务视图"><svg viewBox="0 0 18 18"><path d="M1.500 1v3h10V1M1.500 17v-3h10v3M1.500 6.500h10v5h-10zM15.500 1v4M15.500 10v7" fill="none" stroke="#fff" stroke-width="1.300"/><path d="M14 5.500h3v3.500h-3z" fill="#fff"/></svg></button>
    <button aria-label="四叶"><svg viewBox="0 0 24 24"><g fill="#e8eaeb"><path id="leaf" d="M12 11.500C5 12.500 1.500 11 1.500 6.500S5 1 9 1c2.500 0 3.500 1 3 3-1.500 2-1.500 5 0 7.500z"/><use href="#leaf" transform="rotate(90 12 12)"/><use href="#leaf" transform="rotate(180 12 12)"/><use href="#leaf" transform="rotate(270 12 12)"/></g></svg></button>
    <button aria-label="浏览器"><svg viewBox="0 0 24 24"><path d="M7 13.500h13.500c1-11-14-11-15 0 0 8.500 11 9 14 3.500h-4c-3 2.500-8 1-8.500-3.500zM7.500 10.500c1-4.500 8-4.500 8.500 0z" fill="#f2f2f2" fill-rule="evenodd"/><path d="M5.500 15C1 22 3 24 8 21M10 4.500C16 1 23-1 20.500 6.500" fill="none" stroke="#f2f2f2" stroke-width="1.800"/></svg></button>
    <button aria-label="提醒"><svg viewBox="0 0 28 28"><path d="M22 16c0 12-20 12-20 0C2 4 20 6 19 16c-1 9-14 7-13-1 1-7 10-5 10 1 0 5-7 4-7 0 0-2 4-3 4 0" fill="none" stroke="#ccd0d2" stroke-width="1.600"/><path d="M20 0c4 0 5 3 5 8l2 3H14l2-3c0-5 1-8 4-8zM18 12h4v2h-4z" fill="#dba40f"/></svg></button>
  </div>
  <i class="tsep"></i>
  <div class="apps run">
    <button aria-label="浏览器"><svg viewBox="0 0 24 24"><path d="M23 3c-1 4-5 4-9 4-7 1-8 11-2 11 4 0 5-2 4-5l5-2c3 7-2 13-9 13C3 24-1 14 2 7 5 1 12 0 15 1.500c3 2 5 2 8 1.500z" fill="#1593ee"/><path d="M6 4c4-3 7-2 11 0-6-1-11 1-13 6-1-2 0-4 2-6z" fill="#6ed0ff"/></svg></button>
    <button aria-label="广联达"><svg viewBox="0 0 16 16"><use href="#app"/></svg></button>
    <button aria-label="记事"><svg viewBox="0 0 24 24"><rect width="24" height="24" rx="1" fill="#f29222"/><path d="m3 5 13-2 4 15-14 3z" fill="#fff5cf"/><path d="m6 9 9-2M6 12l9-2M7 16l8-2" stroke="#aaa072"/><path d="m10 17 2-4L21 2l2 2-9 11z" fill="#8c3010"/></svg></button>
    <button aria-label="帮助"><svg viewBox="0 0 24 24"><path d="M4 8h11v14H4z" fill="#e4e4e4"/><path d="M6 11h7M6 14h7M6 17h7M6 20h7" stroke="#555"/><path d="M12 8V4c2-3 8-3 8 1 0 3-4 3-4 8" fill="none" stroke="#05151a" stroke-width="5"/><path d="M12 7V5c1-4 8-4 8 0 0 3-4 3-4 8" fill="none" stroke="#ffef00" stroke-width="3.500"/><path d="M14 15h4v4h-4z" fill="#ffef00"/></svg></button>
  </div>
  <div class="tscroll"><svg viewBox="0 0 10 10"><path d="m1 7 4-4 4 4"/></svg><svg viewBox="0 0 10 10"><path d="m1 3 4 4 4-4"/></svg></div>
  <i class="tsep"></i>
  <div class="tray">
    <a class="w44" href="#links">链接</a>
    <button class="w44" aria-label="联系人"><svg width="16" height="16" viewBox="0 0 16 16"><circle cx="5" cy="8" r="2.300"/><circle cx="11" cy="4" r="2.700"/><path d="M1 15c0-6 8-6 8 0M8 8c3-2 7 0 7 4"/></svg></button>
    <div class="cpu">41%<br>CPU使用</div>
    <button class="caret" aria-label="显示隐藏的图标"><svg width="14" height="14" viewBox="0 0 14 14"><path d="m1 10 6-6 6 6"/></svg></button>
    <button class="w24" aria-label="通知"><svg width="14" height="16" viewBox="0 0 14 16"><path class="f" d="M7 1c4 0 4 3 4 6v3l2 3H1l2-3V7c0-3 0-6 4-6zM5 14h4v1H5z"/></svg></button>
    <button class="w24" aria-label="网络"><svg width="14" height="14" viewBox="0 0 14 14"><path d="M1 13C1 6 6 2 13 2M4 13c0-5 4-8 9-8M7 13c0-3 3-5 6-5M10 13c0-1 1-2 3-2"/></svg></button>
    <button class="w24" aria-label="音量"><svg width="16" height="14" viewBox="0 0 16 14"><path d="M1 5h2l4-4v12L3 9H1zM9 5c1 1 1 3 0 4M11 3c2 2 2 6 0 8M13 1c3 3 3 9 0 12"/></svg></button>
    <button class="w30" aria-label="触摸键盘"><svg width="22" height="14" viewBox="0 0 22 14"><path d="M.5 1.500h21v11H.5z"/><path d="M3 4.500h16M3 7.500h16" stroke-dasharray="1.500 1"/><path d="M5 10.500h12"/></svg></button>
    <button class="w24">中</button>
    <button class="w30" aria-label="搜狗输入法"><svg width="16" height="16" viewBox="0 0 16 16"><rect width="15" height="15" x=".5" y=".5" rx="2" fill="#f2481d" stroke="none" transform="rotate(-8 8 8)"/><path d="M12 4.500C7 2 3 5 6 7s7 1 5 4-6 1-7 0" stroke-width="2.300"/></svg></button>
    <div class="clock">13:38<br>2018/9/14</div>
    <button class="note" aria-label="操作中心"><svg width="26" height="26" viewBox="0 0 26 26"><path class="f" d="M2 2h16v13H9l-4 4v-4H2z"/><path class="ink" d="M5 5.500h10M5 8.500h10M5 11.500h6"/><circle class="disc" cx="17" cy="17" r="8"/></svg><b>1</b></button>
    <i class="peek"></i>
  </div>
</footer>
</body>
</html>
```

FILE: styles.css
```css
* { box-sizing: border-box; }
body {
  margin: 0;
  height: 100vh;
  display: flex;
  flex-direction: column;
  overflow: hidden;
  background: #f0f0f0;
  color: #000;
  font: 12px/16px "Open Sans", "Noto Sans CJK SC", sans-serif;
}
button, input, select { font: inherit; color: inherit; margin: 0; }
button { border: 0; background: none; padding: 0; white-space: nowrap; }
ul { list-style: none; margin: 0; padding: 0; }
s { text-decoration: none; font: 10px/16px "Liberation Mono", monospace; }
.defs { position: absolute; width: 0; height: 0; }
.ic { width: 16px; height: 16px; flex: none; }

/* title bar */
.titlebar {
  position: relative;
  flex: none;
  height: 24px;
  display: flex;
  align-items: center;
  background: #fff;
  padding-left: 2px;
}
.titlebar h1 { margin: 0 0 0 5px; font-size: 13px; font-weight: 400; color: #999; white-space: nowrap; }
.titlebar h1 span { font-size: 12px; }
.ball {
  position: absolute;
  left: 461px;
  top: -28px;
  width: 48px;
  height: 48px;
  border-radius: 50%;
  background: #43bf5e;
  border: 2px solid #e8f6ea;
  box-shadow: 0 1px 4px #777;
  color: #fff;
  font-weight: 700;
  font-size: 11px;
  text-align: center;
  padding-top: 25px;
  z-index: 2;
}
.winbtns { margin-left: auto; display: flex; padding-right: 2px; }
.winbtns button { width: 46px; height: 22px; }
.winbtns svg { width: 12px; height: 12px; fill: none; stroke: #888; display: block; margin: 2px auto auto; }

/* shared toolbar parts */
.bar {
  position: relative;
  display: flex;
  align-items: center;
  height: 27px;
  flex: none;
  background: linear-gradient(#fdfdfd, #f3f3f3);
  border-radius: 3px;
}
.btn { display: flex; align-items: center; gap: 4px; height: 24px; padding: 0 4px 0 3px; }
.off { color: #8d8d8d; }
.on { background: #dfebf6; outline: 1px solid #0078d7; outline-offset: -1px; }
.dd { width: 8px; display: flex; justify-content: flex-end; }
.dd::before { content: ""; border: 3px solid transparent; border-top-color: #000; border-bottom: 0; }
.dd.tight { width: 5px; }
.off .dd::before { border-top-color: #777; }
.sep { width: 1px; height: 17px; margin: 0 2px 0 3px; background: #bdbdbd; }
.grip { width: 2px; height: 14px; margin: 0 3px; background: repeating-linear-gradient(#bbb 0 2px, transparent 2px 4px); }
.more { position: absolute; right: 3px; top: 0; font: 700 15px/12px "Open Sans", sans-serif; }
.sigma { font: 700 15px/16px "Liberation Serif", serif; text-align: center; }

/* menu row */
.menurow { flex: none; height: 29px; display: flex; align-items: center; }
.menu { display: flex; flex: 0 0 785px; justify-content: space-between; padding-left: 1px; }
.menu button { padding: 0 5px 0 6px; height: 24px; }
.promo { width: 188px; margin: 0 2px; justify-content: center; }
.promo a { color: #5a2d0c; text-decoration: none; }
.account { flex: 1; padding-left: 1px; }
.account .ic { margin: 0 0 0 8px; }
.account > span { margin-left: 4px; }
.account .btn .ic { margin: 0; }

/* main tool row */
.toolrow { flex: none; height: 30px; display: flex; align-items: flex-start; gap: 3px; }
.file { width: 150px; padding-left: 2px; }
.mini { display: flex; align-items: center; gap: 3px; height: 24px; padding: 0 4px 0 3px; }
.common { flex: 1 1 547px; padding-left: 1px; }
.view { flex: 1 1 661px; margin-left: 2px; }

/* work area */
.work { flex: 1; min-height: 0; display: flex; }
.side {
  width: 165px;
  flex: none;
  display: flex;
  flex-direction: column;
  border-right: 1px solid #a0a0a0;
  margin: 1px 5px 2px 0;
}
.sidehead { display: flex; align-items: center; height: 15px; border: 1px solid #a0a0a0; margin-bottom: 2px; }
.sidehead h2 { margin: 0 auto 0 0; font-size: 12px; line-height: 14px; font-weight: 400; }
.sidehead button { width: 18px; height: 13px; }
.sidehead svg { display: block; margin: auto; width: 9px; height: 9px; fill: none; stroke: #000; }
.tab { height: 22px; flex: none; border: 1px solid #a0a0a0; border-bottom: 0; }
.tab:last-child { border-bottom: 1px solid #a0a0a0; }
.pm {
  flex: none;
  height: 28px;
  display: flex;
  align-items: center;
  gap: 7px;
  padding-left: 6px;
  border: 1px solid #a0a0a0;
  background: linear-gradient(#fdfdfd, #efefef);
}
.pm svg { display: block; width: 16px; height: 16px; }
.treebox { flex: 1; min-height: 0; display: flex; border: 1px solid #828790; background: #fff; margin: 0 1px 1px 2px; overflow: hidden; }
.tree { flex: 1; min-width: 0; overflow: hidden; white-space: nowrap; }
.fold { display: flex; align-items: center; gap: 4px; height: 16px; }
.fold::before {
  content: "";
  flex: none;
  width: 6px;
  height: 6px;
  border: solid #aaa;
  border-width: 1px 1px 0 0;
  transform: rotate(45deg);
  margin: 0 4px 0 7px;
}
.open > .fold::before { border-color: #333; border-width: 0 2px 2px 0; transform: rotate(45deg) translate(-2px, -2px); }
.tree ul { margin-left: 12px; border-left: 1px dotted #888; }
.tree ul li { display: flex; height: 16px; margin-left: 18px; border-left: 1px dotted #888; }
.tree ul li:last-child { border-left-color: transparent; }
.tree ul li::before { content: ""; flex: none; width: 10px; height: 8px; margin-left: -1px; border: dotted #888; border-width: 0 0 1px 1px; }
.tree ul span { display: flex; align-items: center; padding: 0 5px 0 0; height: 16px; }
.tree span .ic { margin-right: 4px; }
.tree .sel { background: #d9d9d9; }
.scroll { width: 15px; flex: none; display: flex; flex-direction: column; align-items: center; background: #f0f0f0; margin-right: 1px; }
.scroll svg, .tscroll svg { width: 9px; height: 17px; fill: none; stroke: #505050; stroke-width: 2; flex: none; }
.scroll i { width: 100%; flex: 0 1 386px; background: #cdcdcd; }
.scroll svg:last-child { margin-top: auto; }

.stage { flex: 1; min-width: 0; display: flex; flex-direction: column; }
.row { flex: none; height: 28px; display: flex; align-items: center; }
.row:nth-child(2) { height: 27px; }
.axis { margin-left: 32px; }
.stub { width: 31px; height: 24px; margin-left: 414px; }
.combo { position: relative; width: 69px; height: 24px; margin-right: 3px; background: #fff; flex: none; }
.combo.short { width: 57px; }
.combo select { appearance: none; border: 0; background: none; width: 100%; height: 24px; padding: 0 12px 0 2px; border-radius: 0; display: block; }
.combo::after {
  content: "";
  position: absolute;
  right: 2px;
  top: 11px;
  border: 3px solid transparent;
  border-top-color: #000;
  border-bottom: 0;
  pointer-events: none;
}
.combo::before { content: ""; position: absolute; right: 0; top: 0; width: 11px; height: 24px; background: #f5f5f5; }
.combo.plain::before { background: #fff; }
.canvas { flex: 1; min-height: 0; background: #000; }
.canvas svg { display: block; width: 100%; height: 100%; }
.ax { font: 300 14px "Open Sans", sans-serif; }
.lvl { font: 16px "Open Sans", sans-serif; fill: #d0d0d0; }
.snap { flex: none; height: 33px; display: flex; align-items: center; gap: 2px; padding: 0 0 2px 211px; }
.num { display: flex; align-items: center; gap: 2px; color: #777; font-size: 13px; padding-right: 3px; }
.num span { position: relative; width: 58px; height: 23px; border: 1px solid #7a7a7a; background: #f4f4f4; }
.num input { width: 100%; height: 21px; border: 0; background: none; text-align: right; padding: 0 18px 0 0; font-size: 12px; color: #777; display: block; }
.num span i::before, .num span i::after { content: ""; position: absolute; right: 4px; border: 3px solid transparent; }
.num span i::before { top: 4px; border-bottom-color: #666; border-top: 0; }
.num span i::after { bottom: 4px; border-top-color: #666; border-bottom: 0; }
.num.wide span { width: 68px; }
.chk { display: flex; align-items: center; gap: 8px; padding: 0 4px 0 0; }
.chk input { appearance: none; width: 11px; height: 11px; border: 1px solid #999; background: #f8f8f8; }

/* status bar */
.status { flex: none; height: 20px; display: flex; gap: 3px; padding-bottom: 1px; }
.status span { border: 1px solid #d5d5d5; background: linear-gradient(#fff, #f3f3f3); padding: 0 1px; white-space: nowrap; line-height: 17px; overflow: hidden; }
.s1 { width: 147px; }
.s2 { width: 78px; }
.s3 { width: 97px; }
.s4 { width: 48px; }
.s5 { flex: 1; }
.s6 { width: 70px; }

/* taskbar */
.taskbar { flex: none; height: 40px; display: flex; align-items: center; background: #05151a; color: #fff; }
.start { width: 48px; height: 40px; }
.start svg { display: block; margin: auto; }
.search { width: 344px; height: 40px; background: #f2f2f2; display: flex; align-items: center; padding: 0 12px 0 8px; }
.search input { flex: 1; min-width: 0; border: 0; background: none; padding: 0 0 0 10px; font-size: 14px; outline: 0; color: #333; }
.search input::placeholder { color: #333; opacity: 1; }
.apps { display: flex; height: 40px; }
.apps button { width: 50px; }
.apps svg { width: 24px; height: 24px; display: block; margin: auto; }
.apps:not(.run) button:first-child svg { width: 18px; height: 18px; }
.apps:not(.run) button:nth-child(4) svg { width: 28px; height: 28px; }
.tsep { width: 4px; height: 16px; margin: 0 5px; border: solid #3b484c; border-width: 0 1px; }
.run { padding-left: 10px; }
.run button { width: 49px; padding-top: 2px; box-shadow: inset 0 -2px #76b9ed; clip-path: inset(0 5px); }
.tscroll { width: 17px; height: 40px; margin-left: auto; background: #f0f0f0; display: flex; flex-direction: column; align-items: center; justify-content: space-between; padding: 1px 0; margin-right: 8px; }
.tray { display: flex; align-items: center; height: 40px; }
.tray svg { display: block; margin: auto; fill: none; stroke: #fff; stroke-width: 1.3; }
.tray .f { fill: #fff; stroke: none; }
.tray .ink { stroke: #071418; }
.tray .disc { fill: #38444a; stroke: #8a9296; }
.tray a { color: #fff; text-decoration: none; text-align: center; }
.w44 { width: 44px; }
.w24 { width: 24px; }
.w30 { width: 30px; }
.cpu { width: 80px; text-align: center; line-height: 17px; }
.caret { width: 18px; margin-right: 26px; }
.clock { width: 80px; text-align: center; line-height: 19px; }
.note { width: 46px; position: relative; }
.note b { position: absolute; left: 24px; top: 9px; font-size: 12px; font-weight: 400; }
.peek { width: 5px; height: 40px; border-left: 1px solid #5a6468; }
```
